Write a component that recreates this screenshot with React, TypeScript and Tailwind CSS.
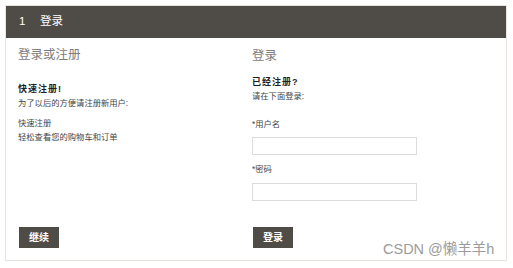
import React from "react";

const font = { fontFamily: "'Liberation Sans', 'Noto Sans CJK SC', sans-serif" };

export default function App() {
  return (
    <div className="w-[513px] h-[268px] bg-white relative" style={font}>
      <div className="absolute left-[5px] top-[5px] w-[502px] h-[256px] border border-[#e8e3de] flex flex-col">
        <div className="h-[32px] bg-[#4f4b47] flex items-center text-white text-[11.5px] shrink-0">
          <span className="ml-[13px] w-[21px]">1</span>
          <span>登录</span>
        </div>
        <div className="flex flex-1">
          <div className="w-[246px] pl-[12px] flex flex-col">
            <div className="mt-[10px] h-[14px] leading-[14px] text-[12.5px] text-[#7d7d7d]">登录或注册</div>
            <div className="mt-[20px] h-[14px] leading-[14px] text-[9px] tracking-[1px] font-bold text-[#1e1e1e]">快速注册!</div>
            <div className="h-[14px] leading-[14px] text-[8.3px] text-[#444]">为了以后的方便请注册新用户:</div>
            <div className="mt-[6px] h-[14px] leading-[14px] text-[8.3px] text-[#444]">快速注册</div>
            <div className="h-[14px] leading-[14px] text-[8.3px] text-[#444]">轻松查看您的购物车和订单</div>
            <div className="mt-auto mb-[12px] ml-[1px] w-[40px] h-[21px] bg-[#4f4b47] text-white text-[10px] font-bold flex items-center justify-center">继续</div>
          </div>
          <div className="flex-1 flex flex-col">
            <div className="mt-[11px] h-[14px] leading-[14px] text-[12.5px] text-[#7d7d7d]">登录</div>
            <div className="mt-[12px] h-[14px] leading-[14px] text-[9px] tracking-[1px] font-bold text-[#1e1e1e]">已经注册?</div>
            <div className="h-[14px] leading-[14px] text-[8.3px] text-[#444]">请在下面登录:</div>
            <div className="mt-[14px] h-[14px] leading-[14px] text-[8.3px] text-[#444]">*用户名</div>
            <div className="mt-[6px] w-[165px] h-[18px] border border-[#dcdcdc] bg-white"></div>
            <div className="mt-[7px] h-[14px] leading-[14px] text-[8.3px] text-[#444]">*密码</div>
            <div className="mt-[7px] w-[165px] h-[18px] border border-[#dcdcdc] bg-white"></div>
            <div className="mt-auto mb-[12px] ml-[1px] w-[40px] h-[21px] bg-[#4f4b47] text-white text-[10px] font-bold flex items-center justify-center">登录</div>
          </div>
        </div>
      </div>
      <div className="absolute left-[383px] top-[241px] text-[14.5px] leading-[16px] text-[#9b9b9b]">CSDN @懒羊羊h</div>
    </div>
  );
}
